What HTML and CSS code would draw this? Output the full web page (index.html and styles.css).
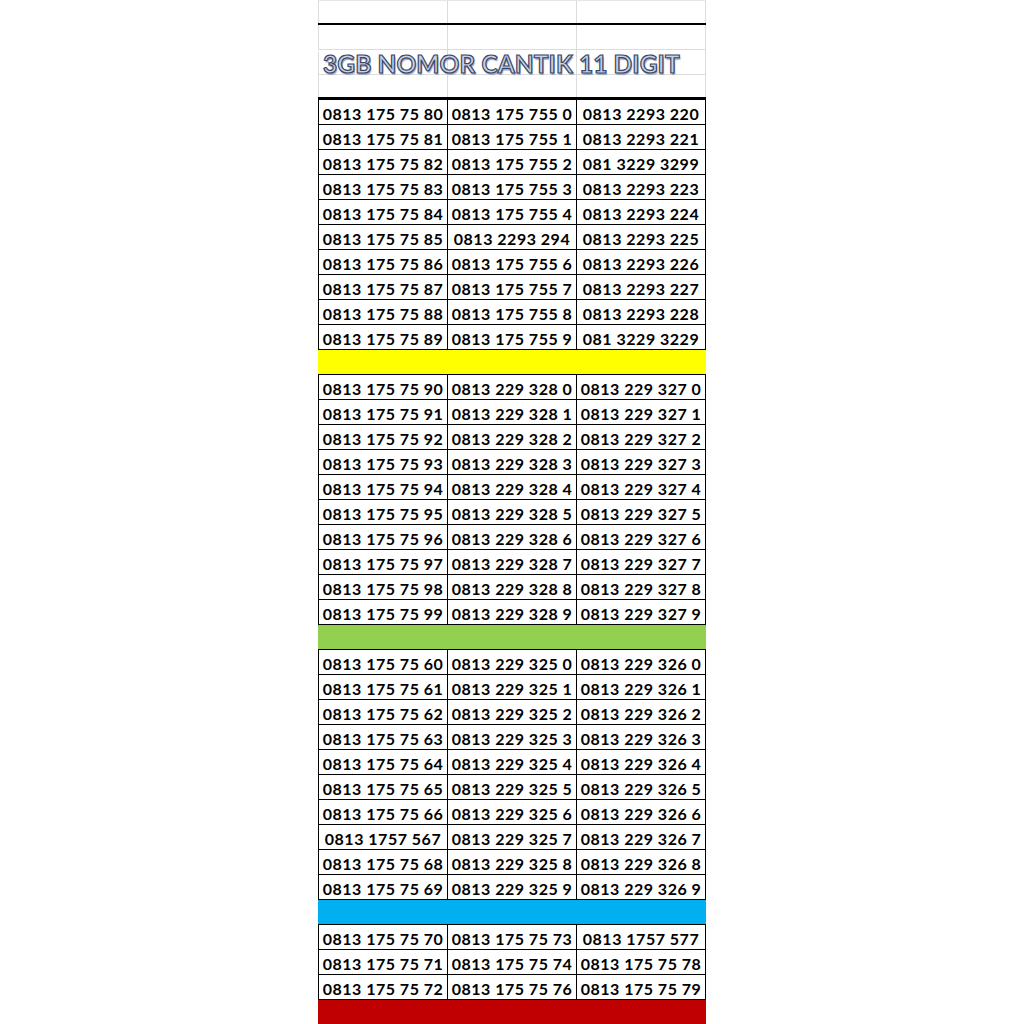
FILE: index.html
```html
<!DOCTYPE html>
<html lang="id">
<head>
<meta charset="utf-8">
<title>3GB Nomor Cantik 11 Digit</title>
<link rel="stylesheet" href="styles.css">
</head>
<body>
<div class="sheet">
  <div class="top">
    <div class="grid-row r0"><div></div><div></div><div></div></div>
    <div class="thick"></div>
    <div class="grid-row r1"><div></div><div></div><div></div></div>
    <div class="grid-row r2 title-row"><div class="title">3GB NOMOR CANTIK 11 DIGIT</div><div></div><div></div></div>
    <div class="grid-row r3"><div></div><div></div><div></div></div>
    <div class="thick"></div>
  </div>

  <div class="block">
    <div>0813 175 75 80</div><div>0813 175 755 0</div><div>0813 2293 220</div>
    <div>0813 175 75 81</div><div>0813 175 755 1</div><div>0813 2293 221</div>
    <div>0813 175 75 82</div><div>0813 175 755 2</div><div>081 3229 3299</div>
    <div>0813 175 75 83</div><div>0813 175 755 3</div><div>0813 2293 223</div>
    <div>0813 175 75 84</div><div>0813 175 755 4</div><div>0813 2293 224</div>
    <div>0813 175 75 85</div><div>0813 2293 294</div><div>0813 2293 225</div>
    <div>0813 175 75 86</div><div>0813 175 755 6</div><div>0813 2293 226</div>
    <div>0813 175 75 87</div><div>0813 175 755 7</div><div>0813 2293 227</div>
    <div>0813 175 75 88</div><div>0813 175 755 8</div><div>0813 2293 228</div>
    <div>0813 175 75 89</div><div>0813 175 755 9</div><div>081 3229 3229</div>
  </div>
  <div class="band yellow"></div>

  <div class="block">
    <div>0813 175 75 90</div><div>0813 229 328 0</div><div>0813 229 327 0</div>
    <div>0813 175 75 91</div><div>0813 229 328 1</div><div>0813 229 327 1</div>
    <div>0813 175 75 92</div><div>0813 229 328 2</div><div>0813 229 327 2</div>
    <div>0813 175 75 93</div><div>0813 229 328 3</div><div>0813 229 327 3</div>
    <div>0813 175 75 94</div><div>0813 229 328 4</div><div>0813 229 327 4</div>
    <div>0813 175 75 95</div><div>0813 229 328 5</div><div>0813 229 327 5</div>
    <div>0813 175 75 96</div><div>0813 229 328 6</div><div>0813 229 327 6</div>
    <div>0813 175 75 97</div><div>0813 229 328 7</div><div>0813 229 327 7</div>
    <div>0813 175 75 98</div><div>0813 229 328 8</div><div>0813 229 327 8</div>
    <div>0813 175 75 99</div><div>0813 229 328 9</div><div>0813 229 327 9</div>
  </div>
  <div class="band green"></div>

  <div class="block">
    <div>0813 175 75 60</div><div>0813 229 325 0</div><div>0813 229 326 0</div>
    <div>0813 175 75 61</div><div>0813 229 325 1</div><div>0813 229 326 1</div>
    <div>0813 175 75 62</div><div>0813 229 325 2</div><div>0813 229 326 2</div>
    <div>0813 175 75 63</div><div>0813 229 325 3</div><div>0813 229 326 3</div>
    <div>0813 175 75 64</div><div>0813 229 325 4</div><div>0813 229 326 4</div>
    <div>0813 175 75 65</div><div>0813 229 325 5</div><div>0813 229 326 5</div>
    <div>0813 175 75 66</div><div>0813 229 325 6</div><div>0813 229 326 6</div>
    <div>0813 1757 567</div><div>0813 229 325 7</div><div>0813 229 326 7</div>
    <div>0813 175 75 68</div><div>0813 229 325 8</div><div>0813 229 326 8</div>
    <div>0813 175 75 69</div><div>0813 229 325 9</div><div>0813 229 326 9</div>
  </div>
  <div class="band blue"></div>

  <div class="block">
    <div>0813 175 75 70</div><div>0813 175 75 73</div><div>0813 1757 577</div>
    <div>0813 175 75 71</div><div>0813 175 75 74</div><div>0813 175 75 78</div>
    <div>0813 175 75 72</div><div>0813 175 75 76</div><div>0813 175 75 79</div>
  </div>
  <div class="band red"></div>
</div>
</body>
</html>
```

FILE: styles.css
```css
html, body {
  margin: 0;
  padding: 0;
  background: #ffffff;
}

body {
  height: 1024px;
  overflow: hidden;
  font-family: "Lato", "Open Sans", sans-serif;
}

.sheet {
  margin-left: 318px;
  width: 388px;
}

.grid-row {
  display: grid;
  grid-template-columns: 129px 129px 130px;
  border-bottom: 1px solid #dcdcdc;
}

.grid-row > div {
  border-left: 1px solid #dcdcdc;
}

.grid-row > div:last-child {
  border-right: 1px solid #dcdcdc;
}

.r0 { height: 22px; border-top: 1px solid #e6e6e6; border-bottom: none; }
.r1 { height: 24px; }
.r2 { height: 24px; }
.r3 { height: 22px; border-bottom: none; }

.thick {
  height: 2px;
  background: #000000;
}

.title-row {
  position: relative;
}

.title {
  position: relative;
  white-space: nowrap;
  font-family: "Lato", sans-serif;
  font-weight: 700;
  font-size: 24.5px;
  line-height: 24px;
  padding-left: 4px;
  color: #c9d2e6;
  -webkit-text-stroke: 1.2px #3a4868;
  text-shadow: 1px 2px 1px #9aa6c0;
  letter-spacing: 0.1px;
  z-index: 1;
  margin-top: 2px;
}

.block {
  display: grid;
  grid-template-columns: repeat(3, 1fr);
  gap: 1px;
  padding: 1px;
  background: #000000;
}

.block > div {
  background: #ffffff;
  height: 24px;
  line-height: 27px;
  text-align: center;
  font-weight: 700;
  font-size: 16px;
  letter-spacing: 0.5px;
  color: #000000;
  white-space: nowrap;
}

.band {
  height: 24px;
}

.yellow { background: #ffff00; }
.green { background: #92d050; }
.blue { background: #00b0f0; }
.red { background: #c00000; height: 30px; }
```
